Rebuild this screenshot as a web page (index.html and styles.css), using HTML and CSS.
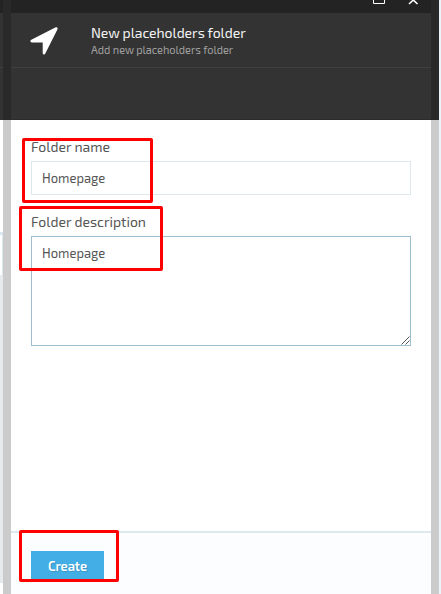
FILE: index.html
```html
<!DOCTYPE html>
<html lang="en">
<head>
<meta charset="utf-8">
<title>New placeholders folder</title>
<link rel="stylesheet" href="styles.css">
</head>
<body>
<div class="page">
  <aside class="backdrop">
    <div class="backdrop-bar"></div>
    <div class="backdrop-head"></div>
    <div class="backdrop-subhead"></div>
    <div class="backdrop-blank"></div>
    <div class="backdrop-field"></div>
    <div class="backdrop-list"></div>
  </aside>
  <div class="frame"><div class="frame-top"></div></div>
  <main class="dialog">
    <div class="titlebar">
      <svg class="window-icons" width="48" height="13" viewBox="0 0 48 13" fill="none" stroke="#fff">
        <path d="M.5 -6.500H11.500V3.500H.5Z"/>
        <path d="M36 -4L44.500 4M44.500 -4L36 4" stroke-width="1.600"/>
      </svg>
    </div>
    <header class="header">
      <svg class="arrow" width="28" height="28" viewBox="0 0 28 28" fill="#fff">
        <path d="M25.800.3Q27.900-.1 27.500 2.200L15.300 26.500Q14.600 27.900 13.300 27.300Q12.700 27 12.700 26V15.400H1.800Q.6 15.400.4 14.300Q.3 13.200 1.300 12.800Z"/>
      </svg>
      <div>
        <h1 class="title">New placeholders folder</h1>
        <p class="subtitle">Add new placeholders folder</p>
      </div>
    </header>
    <div class="toolbar"></div>
    <form class="form">
      <label class="label name-label" for="name">Folder name</label>
      <input class="input" id="name" value="Homepage">
      <label class="label description-label" for="description">Folder description</label>
      <div class="area-wrap">
        <textarea class="input area" id="description">Homepage</textarea>
        <svg class="grip" width="9" height="9" viewBox="0 0 9 9" stroke="#555" fill="none"><path d="M.5 8.500L8.500 .5M4.500 8.500L8.500 4.500"/></svg>
      </div>
    </form>
    <footer class="footer"><button class="create" type="button">Create</button></footer>
  </main>
  <div class="frame"><div class="frame-top"></div></div>
  <div class="edge"></div>
  <div class="mark mark-name"></div>
  <div class="mark mark-description"></div>
  <div class="mark mark-create"></div>
</div>
</body>
</html>
```

FILE: styles.css
```css
* { box-sizing: border-box; }
body { margin: 0; overflow: hidden; font-family: "Exo 2", "Noto Sans", "Open Sans", sans-serif; }
.page { position: relative; display: grid; grid-template-columns: 3px 8px 420px 8px 2px; height: 594px; background: #fff; }
.backdrop { display: flex; flex-direction: column; }
.backdrop-bar { height: 13px; background: #232323; }
.backdrop-head { height: 55px; background: #333; border-bottom: 1px solid #3f3f3f; }
.backdrop-subhead { height: 52px; background: #333; }
.backdrop-blank { height: 112px; }
.backdrop-field { height: 43px; border-top: 3px solid #dce8f0; border-right: 1px solid #dce8f0; }
.backdrop-list { height: 308px; background: #e9e9e9; border-right: 1px solid #e2ebf2; }
.frame { background: #cbcbcb; }
.frame-top { height: 120px; background: #292929; }
.edge { background: #eaf4f9; }
.dialog { display: flex; flex-direction: column; min-width: 0; }
.titlebar { display: flex; justify-content: flex-end; height: 13px; padding-right: 10px; background: #232323; }
.header { display: flex; height: 55px; padding: 14px 0 0 19px; gap: 33px; background: #333; border-bottom: 1px solid #3f3f3f; }
.title { margin: -3px 0 0; font-size: 14px; line-height: 17px; font-weight: 400; color: #f3f3f3; letter-spacing: -.05px; white-space: nowrap; }
.subtitle { margin: 1px 0 0; font-size: 11px; line-height: 15px; color: #a0a0a0; letter-spacing: -.03px; white-space: nowrap; }
.toolbar { height: 52px; background: #333; border-bottom: 1px solid #2c2c2c; }
.form { display: flex; flex-direction: column; height: 411px; padding: 18px 20px 0; }
.label { height: 23px; font-size: 14px; line-height: 18px; color: #555; white-space: nowrap; }
.description-label { margin-top: 18px; height: 23px; }
.input { display: block; width: 380px; height: 34px; margin: 0; padding: 0 10px; border: 1px solid #dce7ee; border-radius: 0; background: #fff; font: 13px/18px "Exo 2", "Noto Sans", "Open Sans", sans-serif; color: #555; outline: none; }
.area-wrap { position: relative; }
.area { height: 110px; padding-top: 7px; border-color: #9fbfd1; resize: none; overflow: hidden; }
.grip { position: absolute; right: 1px; bottom: 1px; }
.footer { height: 63px; padding: 18px 20px 0; border-top: 2px solid #dde8ef; background: #fbfdff; }
.create { display: block; width: 73px; height: 30px; padding: 0; border: 0; background: #43aee5; color: #fff; font: 600 13px/30px "Exo 2", "Noto Sans", "Open Sans", sans-serif; letter-spacing: -.1px; text-shadow: 1px 1px 1px rgba(0, 0, 0, .15); }
.mark { position: absolute; border: 3px solid #f00; border-radius: 2px; }
.mark-name { left: 22px; top: 138px; width: 131px; height: 65px; }
.mark-description { left: 19px; top: 206px; width: 144px; height: 65px; }
.mark-create { left: 19px; top: 530px; width: 100px; height: 52px; }
```
